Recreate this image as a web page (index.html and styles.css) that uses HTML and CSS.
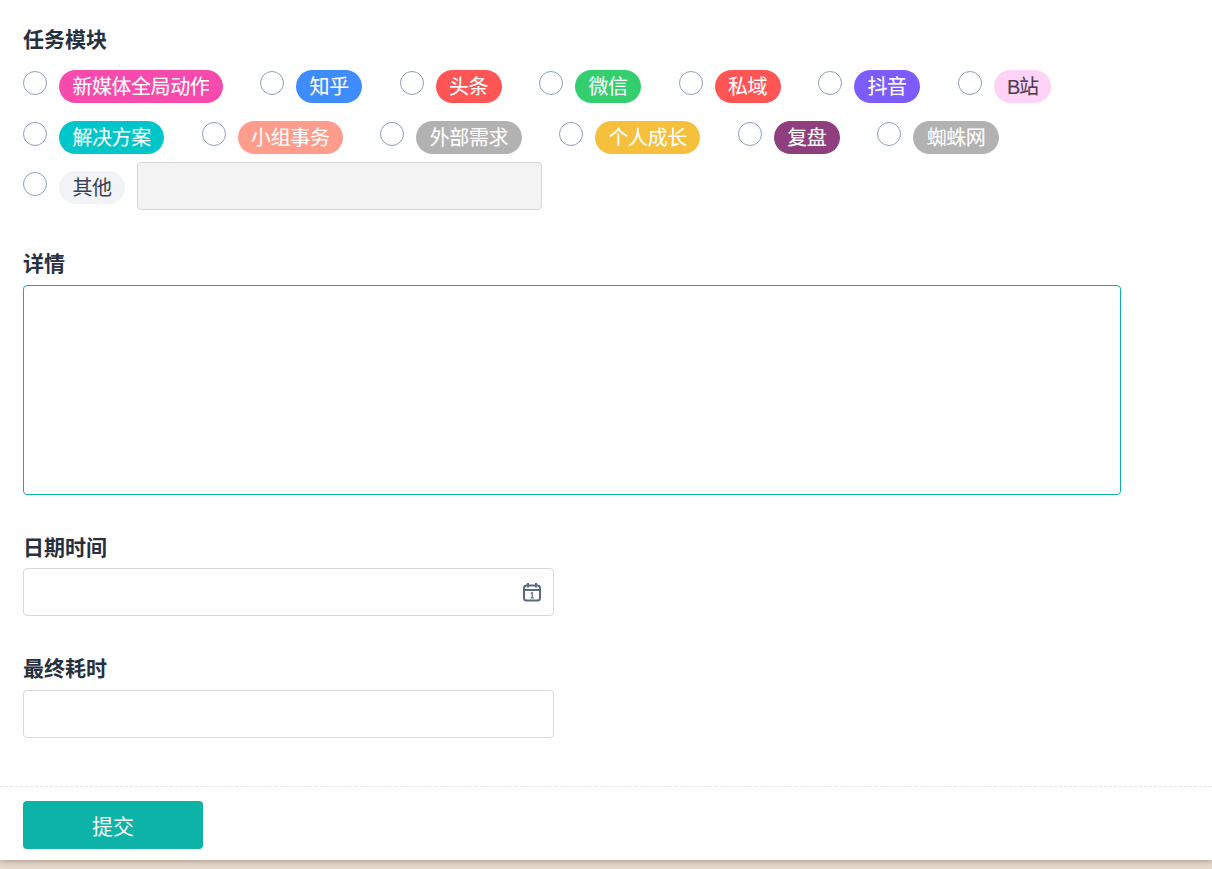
FILE: index.html
```html
<!DOCTYPE html>
<html lang="en">
<head>
    <meta charset="UTF-8">
    <meta name="viewport" content="width=device-width, initial-scale=1.0">
    <title>任务表单</title>
    <link rel="stylesheet" href="styles.css">
</head>
<body>
    <form class="panel">
        <div class="fields">
            <div class="field field-module">
                <label class="field-label">任务模块</label>
                <div class="options">
                    <label class="option"><input type="radio" name="module"><span class="chip chip-pink">新媒体全局动作</span></label>
                    <label class="option"><input type="radio" name="module"><span class="chip chip-blue">知乎</span></label>
                    <label class="option"><input type="radio" name="module"><span class="chip chip-red">头条</span></label>
                    <label class="option"><input type="radio" name="module"><span class="chip chip-green">微信</span></label>
                    <label class="option"><input type="radio" name="module"><span class="chip chip-red">私域</span></label>
                    <label class="option"><input type="radio" name="module"><span class="chip chip-purple">抖音</span></label>
                    <label class="option"><input type="radio" name="module"><span class="chip chip-bili">B站</span></label>
                    <label class="option"><input type="radio" name="module"><span class="chip chip-teal">解决方案</span></label>
                    <label class="option"><input type="radio" name="module"><span class="chip chip-salmon">小组事务</span></label>
                    <label class="option"><input type="radio" name="module"><span class="chip chip-grey">外部需求</span></label>
                    <label class="option"><input type="radio" name="module"><span class="chip chip-yellow">个人成长</span></label>
                    <label class="option"><input type="radio" name="module"><span class="chip chip-plum">复盘</span></label>
                    <label class="option"><input type="radio" name="module"><span class="chip chip-grey">蜘蛛网</span></label>
                    <div class="option option-other">
                        <label class="option-inner"><input type="radio" name="module"><span class="chip chip-other">其他</span></label>
                        <input class="text-input other-input" type="text" disabled>
                    </div>
                </div>
            </div>

            <div class="field field-detail">
                <label class="field-label">详情</label>
                <textarea class="detail-input"></textarea>
            </div>

            <div class="field field-date">
                <label class="field-label">日期时间</label>
                <div class="date-wrap">
                    <input class="text-input" type="text">
                    <svg class="date-icon" viewBox="0 0 20 20" width="20" height="20" fill="none" stroke="#5a6a80" stroke-width="2">
                        <rect x="2" y="3.5" width="16" height="15" rx="2.5"/>
                        <path d="M2 8h16M6 1v4.5M14 1v4.5"/>
                        <path d="M8.8 11.4l1.4-.8v5.2M8.6 15.8h3.2" stroke-width="1.2"/>
                    </svg>
                </div>
            </div>

            <div class="field field-time">
                <label class="field-label">最终耗时</label>
                <input class="text-input" type="text">
            </div>
        </div>

        <div class="footer">
            <button class="submit" type="button">提交</button>
        </div>
    </form>
</body>
</html>
```

FILE: styles.css
```css
html, body {
    height: 100%;
}
body {
    margin: 0;
    overflow: hidden;
    background: #e6dacd;
    font-family: "Liberation Sans", "Noto Sans CJK SC", sans-serif;
    color: #1f2937;
}
.panel {
    height: 860px;
    background: #fff;
    box-shadow: 0 0 7px rgba(60, 40, 20, 0.5);
}
.fields {
    padding: 26px 23px 0;
    height: 786px;
    box-sizing: border-box;
}
.field-label {
    display: block;
    font-size: 21px;
    line-height: 28px;
    font-weight: 700;
    color: #27303f;
    margin-bottom: 7px;
}
.field-module {
    height: 224px;
}
.field-date {
    margin-top: 39px;
}
.field-date .field-label {
    margin-bottom: 6px;
}
.field-time {
    margin-top: 39px;
}
.options {
    display: flex;
    flex-wrap: wrap;
    column-gap: 37.5px;
    row-gap: 9px;
}
.option, .option-inner {
    display: flex;
    align-items: flex-start;
}
.option {
    padding-top: 9px;
    height: 33px;
}
.option input[type="radio"] {
    appearance: none;
    box-sizing: border-box;
    width: 24px;
    height: 24px;
    margin: 1px 12px 0 0;
    border: 1px solid #8e9fba;
    border-radius: 50%;
    background: #fff;
}
.chip {
    display: block;
    height: 33px;
    line-height: 35px;
    padding: 0 13.4px;
    border-radius: 17px;
    font-size: 20px;
    letter-spacing: -0.4px;
    -webkit-text-stroke: 0.1px;
    color: #fff;
    white-space: nowrap;
}
.chip-pink { background: #f64bad; letter-spacing: -0.45px; }
.chip-blue { background: #3f8cff; }
.chip-red { background: #ff5555; }
.chip-green { background: #34ce6f; }
.chip-purple { background: #7c5cff; }
.chip-bili { background: #ffd3f5; color: #4b3f4f; letter-spacing: -1.4px; }
.chip-teal { background: #00c6c9; }
.chip-salmon { background: #ff9c8c; }
.chip-grey { background: #b2b2b2; }
.chip-yellow { background: #f6c03c; }
.chip-plum { background: #8f3f7d; }
.chip-other { background: #f1f3f7; color: #374151; -webkit-text-stroke: 0; }

.option-other {
    padding-top: 0;
    height: 48px;
    margin-top: -1px;
}
.option-other .option-inner {
    padding-top: 9px;
}
.text-input {
    display: block;
    box-sizing: border-box;
    width: 531px;
    height: 48px;
    border: 1px solid #d6d8dc;
    border-radius: 4px;
    background: #fff;
    font-size: 18px;
    outline: none;
}
.other-input {
    width: 405px;
    margin-left: 12px;
    background: #f3f3f4;
}
.detail-input {
    display: block;
    box-sizing: border-box;
    width: 1098px;
    height: 210px;
    border: 1px solid #0db3a6;
    border-radius: 4px;
    outline: none;
    resize: none;
}
.date-wrap {
    position: relative;
    width: 531px;
}
.date-icon {
    position: absolute;
    right: 12px;
    top: 14px;
}
.footer {
    box-sizing: border-box;
    height: 74px;
    border-top: 1px dashed #e3e5e7;
    padding: 14px 23px 0;
}
.submit {
    display: block;
    width: 180px;
    height: 48px;
    border: 0;
    border-radius: 4px;
    background: #0db3a6;
    color: #fff;
    font-family: inherit;
    font-size: 21px;
}
```
